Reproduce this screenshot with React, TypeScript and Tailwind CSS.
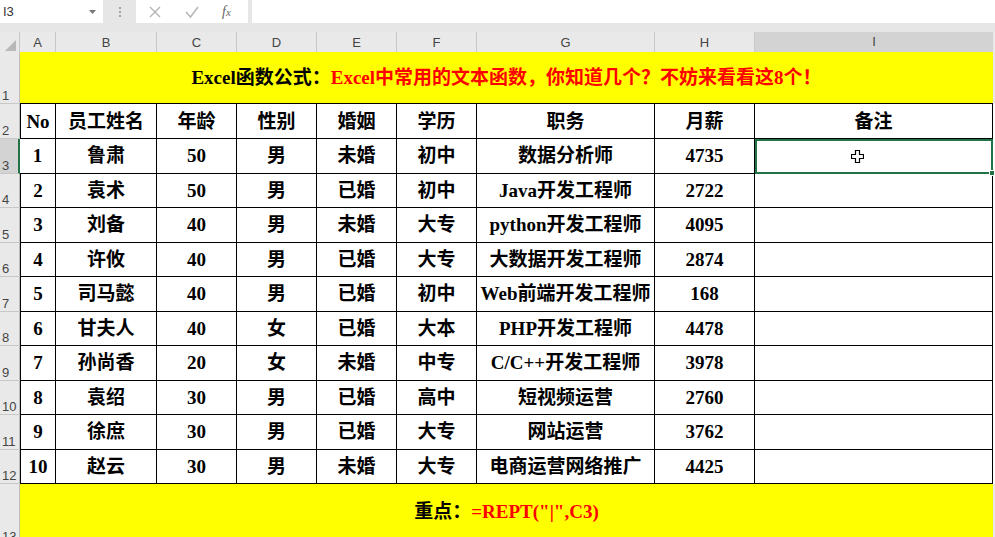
import React from "react";

const cols = "grid grid-cols-[20px_36px_101px_80px_80px_80px_80px_178px_100px_238px]";

const rows = [
  ["1", "鲁肃", "50", "男", "未婚", "初中", "数据分析师", "4735"],
  ["2", "袁术", "50", "男", "已婚", "初中", "Java开发工程师", "2722"],
  ["3", "刘备", "40", "男", "未婚", "大专", "python开发工程师", "4095"],
  ["4", "许攸", "40", "男", "已婚", "大专", "大数据开发工程师", "2874"],
  ["5", "司马懿", "40", "男", "已婚", "初中", "Web前端开发工程师", "168"],
  ["6", "甘夫人", "40", "女", "已婚", "大本", "PHP开发工程师", "4478"],
  ["7", "孙尚香", "20", "女", "未婚", "中专", "C/C++开发工程师", "3978"],
  ["8", "袁绍", "30", "男", "已婚", "高中", "短视频运营", "2760"],
  ["9", "徐庶", "30", "男", "已婚", "大专", "网站运营", "3762"],
  ["10", "赵云", "30", "男", "未婚", "大专", "电商运营网络推广", "4425"],
];

const serif = "font-['Liberation_Serif','Noto_Sans_CJK_SC',serif] font-bold";
const ui = "font-['Liberation_Sans','Noto_Sans',sans-serif]";

function RowHead({ n, active }: { n: string; active?: boolean }) {
  return (
    <div
      className={`flex items-end pl-[2px] pb-[1px] text-[13px] leading-none text-[#444] border-b border-[#c8c8c8] ${ui} ${
        active ? "bg-[#d3d3d3] border-r-2 border-r-[#217346]" : "bg-[#e9e9e9] border-r border-r-[#bdbdbd]"
      }`}
    >
      {n}
    </div>
  );
}

function FormulaBar() {
  return (
    <div className="flex h-[23px] bg-[#e6e6e6]">
      <div className={`flex w-[103px] items-center justify-between bg-white pl-[3px] pr-[7px] text-[13px] text-[#333] ${ui}`}>
        <span>I3</span>
        <svg width="7" height="4" viewBox="0 0 7 4">
          <path d="M0 0h7L3.5 4z" fill="#777" />
        </svg>
      </div>
      <div className="flex w-[33px] items-center justify-center">
        <div className="flex flex-col gap-[2px]">
          <span className="h-[2px] w-[2px] bg-[#a0a0a0]" />
          <span className="h-[2px] w-[2px] bg-[#a0a0a0]" />
          <span className="h-[2px] w-[2px] bg-[#a0a0a0]" />
        </div>
      </div>
      <div className="flex w-[112px] items-center bg-white">
        <svg className="ml-[12px]" width="14" height="14" viewBox="0 0 14 14">
          <path d="M2 2l10 10M12 2L2 12" stroke="#b5b5b5" strokeWidth="1.4" />
        </svg>
        <svg className="ml-[22px]" width="16" height="14" viewBox="0 0 16 14">
          <path d="M2 7l4.5 5L14 2" stroke="#b5b5b5" strokeWidth="1.5" fill="none" />
        </svg>
        <span className="ml-[22px] font-['Liberation_Serif',serif] text-[14px] italic text-[#666]">
          f<span className="text-[11px]">x</span>
        </span>
      </div>
      <div className="w-[4px]" />
      <div className="flex-1 bg-white" />
    </div>
  );
}

function ColHeads() {
  const letters = ["A", "B", "C", "D", "E", "F", "G", "H"];
  return (
    <div className={`${cols} h-[20px] bg-[#e9e9e9] ${ui}`}>
      <div className="relative border-r border-[#c8c8c8]">
        <svg className="absolute bottom-[3px] right-[3px]" width="11" height="11" viewBox="0 0 11 11">
          <path d="M11 0v11H0z" fill="#b8b8b8" />
        </svg>
      </div>
      {letters.map((l) => (
        <div
          key={l}
          className="flex items-center justify-center border-r border-[#c8c8c8] text-[13px] text-[#444]"
        >
          {l}
        </div>
      ))}
      <div className="flex items-center justify-center border-b-2 border-[#217346] bg-[#d3d3d3] text-[13px] text-[#444]">
        I
      </div>
    </div>
  );
}

export default function App() {
  return (
    <div className="relative h-[537px] w-[995px] overflow-hidden bg-[#e6e6e6]">
      <FormulaBar />
      <div className="h-[9px]" />
      <ColHeads />

      <div className={`${cols} h-[52px]`}>
        <RowHead n="1" />
        <div className={`col-span-9 flex items-center justify-center border-b border-black bg-[#ffff00] pt-[2px] text-[19px] ${serif}`}>
          <span className="text-black">Excel函数公式：</span>
          <span className="text-[#ff0000]">Excel中常用的文本函数，你知道几个？不妨来看看这8个！</span>
        </div>
      </div>

      <div className={`${cols} h-[35px] bg-white`}>
        <RowHead n="2" />
        {["No", "员工姓名", "年龄", "性别", "婚姻", "学历", "职务", "月薪", "备注"].map((h, i) => (
          <div
            key={h}
            className={`flex items-center justify-center border-b border-r border-black pt-[3px] text-[19px] text-black ${serif} ${
              i === 0 ? "border-l" : ""
            }`}
          >
            {h}
          </div>
        ))}
      </div>

      {rows.map((r, ri) => (
        <div key={r[0]} className={`${cols} h-[34.5px] bg-white`}>
          <RowHead n={String(ri + 3)} active={ri === 0} />
          {r.map((c, i) => (
            <div
              key={i}
              className={`flex items-center justify-center whitespace-nowrap border-b border-r border-black pt-[1px] text-[19px] text-black ${serif} ${
                i === 0 && ri !== 0 ? "border-l" : ""
              }`}
            >
              {c}
            </div>
          ))}
          {ri === 0 ? (
            <div className="relative border-2 border-[#217346]">
              <svg className="absolute left-[94px] top-[9px]" width="13" height="13" viewBox="0 0 13 13">
                <path
                  d="M4.5 0.5h4v4h4v4h-4v4h-4v-4h-4v-4h4z"
                  fill="#fff"
                  stroke="#000"
                  strokeWidth="1.2"
                />
              </svg>
              <span className="absolute -bottom-[4px] -right-[4px] h-[6px] w-[6px] border border-white bg-[#217346]" />
            </div>
          ) : (
            <div className="border-b border-r border-black" />
          )}
        </div>
      ))}

      <div className={`${cols} h-[60px]`}>
        <div className="relative flex items-end border-r border-[#bdbdbd] bg-[#e9e9e9] pb-[1px] pl-[2px] text-[13px] leading-none text-[#444]">
          <span className={ui}>13</span>
          <span className="absolute bottom-0 left-0 h-[6px] w-[5px] bg-[#e53212]" />
        </div>
        <div className={`col-span-9 flex items-start justify-center bg-[#ffff00] pt-[14px] text-[19px] ${serif}`}>
          <span className="text-black">重点：</span>
          <span className="text-[#ff0000]">=REPT("|",C3)</span>
        </div>
      </div>
    </div>
  );
}
